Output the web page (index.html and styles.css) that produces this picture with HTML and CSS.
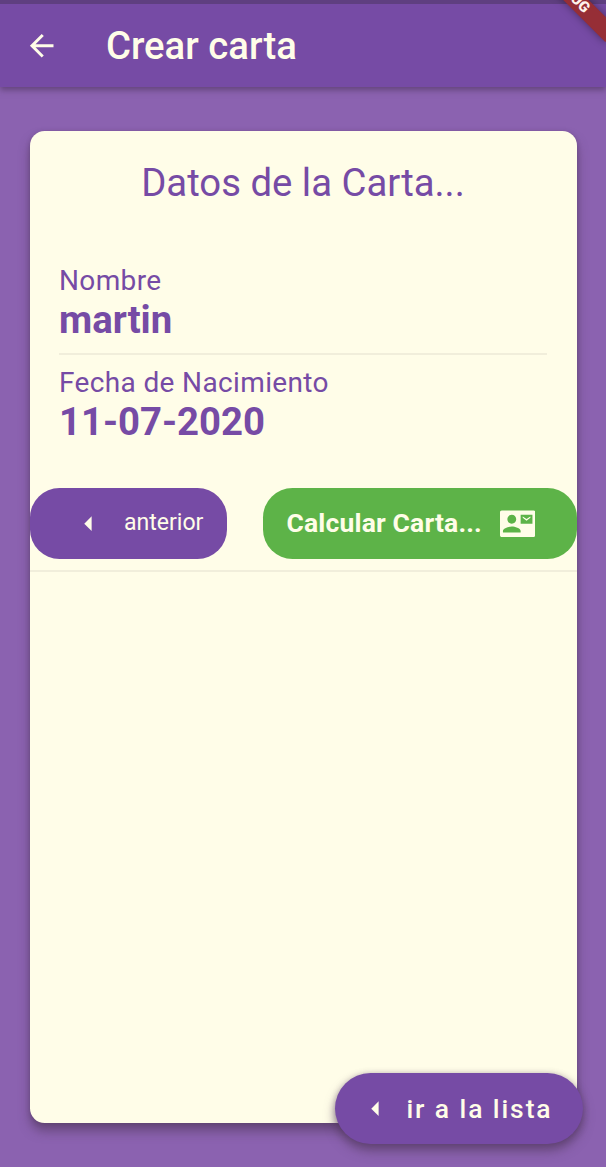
FILE: index.html
```html
<!DOCTYPE html>
<html lang="es">
<head>
<meta charset="utf-8">
<title>Crear carta</title>
<link rel="stylesheet" href="styles.css">
</head>
<body>
<div class="screen">
  <header class="appbar">
    <svg class="icon back" viewBox="0 0 24 24"><path d="M20 11H7.83l5.59-5.59L12 4l-8 8 8 8 1.41-1.41L7.83 13H20v-2z"/></svg>
    <h1 class="appbar-title">Crear carta</h1>
    <div class="banner">DEBUG</div>
  </header>
  <main class="card">
    <h2 class="card-title">Datos de la Carta...</h2>
    <dl class="fields">
      <div class="field">
        <dt class="label">Nombre</dt>
        <dd class="value">martin</dd>
      </div>
      <div class="field">
        <dt class="label">Fecha de Nacimiento</dt>
        <dd class="value">11-07-2020</dd>
      </div>
    </dl>
    <div class="actions">
      <button class="button previous">
        <svg class="icon" viewBox="0 0 24 24"><path d="M14 7l-5 5 5 5V7z"/></svg>
        <span class="caption">anterior</span>
      </button>
      <button class="button calculate">
        <span class="caption">Calcular Carta...</span>
        <svg class="icon" viewBox="0 0 24 24"><path d="M20.6 8V7.2l-2.6 1.6-2.6-1.6V8l2.6 2 2.6-2zM22.8 3H1.2C.5 3 0 3.5 0 4.2v15.6c0 .7.5 1.2 1.2 1.2h21.6c.7 0 1.2-.5 1.2-1.2V4.2c0-.7-.5-1.2-1.2-1.2zM8 6c1.66 0 3 1.34 3 3s-1.34 3-3 3-3-1.34-3-3 1.34-3 3-3zm6 12H2v-1c0-2 4-3.1 6-3.1s6 1.1 6 3.1v1zm8-6h-8V6h8v6z"/></svg>
      </button>
    </div>
  </main>
  <button class="button fab">
    <svg class="icon" viewBox="0 0 24 24"><path d="M14 7l-5 5 5 5V7z"/></svg>
    <span>ir a la lista</span>
  </button>
</div>
</body>
</html>
```
FILE: styles.css
```css
* { box-sizing: border-box; }
body, h1, h2, dl, dd { margin: 0; }
body { font-family: Roboto, sans-serif; background: #8b62b0; }

.screen {
  position: relative;
  display: flex;
  flex-direction: column;
  height: 1167px;
  padding-bottom: 44px;
  overflow: hidden;
}

.icon { width: 35.4px; height: 35.4px; flex: none; fill: #fffde8; display: block; }

.appbar {
  position: relative;
  display: flex;
  align-items: center;
  height: 87px;
  flex: none;
  padding-left: 23.5px;
  border-top: 4px solid #5f3f80;
  background: #764ba5;
  box-shadow: 0 3px 6px rgba(60, 40, 70, .5);
}
.appbar-title {
  margin-left: 47px;
  font-size: 38.3px;
  line-height: 45px;
  font-weight: 500;
  color: #fffde8;
}
.banner {
  position: absolute;
  left: 511px;
  top: -19px;
  width: 118px;
  height: 17.7px;
  line-height: 17.7px;
  transform: rotate(45deg);
  background: #962e36;
  box-shadow: 0 0 9px rgba(0, 0, 0, .4);
  color: #fff3ec;
  font-size: 15px;
  font-weight: 900;
  text-align: center;
}

.card {
  flex: 1;
  margin: 44px 29.5px 0;
  border-radius: 14.7px;
  background: #fffde8;
  color: #764ba5;
  box-shadow: 0 8px 11px rgba(80, 55, 90, .6), 0 1px 4px rgba(70, 50, 80, .35);
}
.card-title {
  padding-top: 29px;
  font-size: 38.3px;
  line-height: 45px;
  font-weight: 400;
  text-align: center;
}
.fields { padding: 59px 29.5px 0; }
.field + .field { border-top: 2px solid #f1eedb; margin-top: 11px; padding-top: 11px; }
.label { font-size: 28px; line-height: 34px; letter-spacing: .36px; }
.value { margin-top: -1px; font-size: 38.3px; line-height: 45px; font-weight: 700; }

.actions {
  display: flex;
  justify-content: space-between;
  margin-top: 44px;
  padding-bottom: 11px;
  border-bottom: 2px solid #f1eedb;
}
.button {
  display: flex;
  align-items: center;
  height: 71px;
  padding: 0;
  border: 0;
  border-radius: 29.5px;
  background: #764ba5;
  color: #fffde8;
  font-family: inherit;
  white-space: nowrap;
}
.caption { padding-bottom: 2px; }
.previous { width: 197.5px; padding-left: 41px; gap: 18px; font-size: 23.1px; }
.calculate {
  width: 314px;
  padding-left: 24px;
  gap: 18px;
  background: #5db348;
  font-size: 26.5px;
  font-weight: 700;
  letter-spacing: .16px;
}
.fab {
  position: absolute;
  right: 23px;
  bottom: 23px;
  width: 248px;
  padding-left: 23px;
  gap: 13px;
  border-radius: 35.5px;
  font-size: 26.5px;
  font-weight: 500;
  letter-spacing: 1.9px;
  box-shadow: 0 7px 11px rgba(80, 55, 90, .6), 0 1px 6px rgba(70, 50, 80, .35);
}
```
